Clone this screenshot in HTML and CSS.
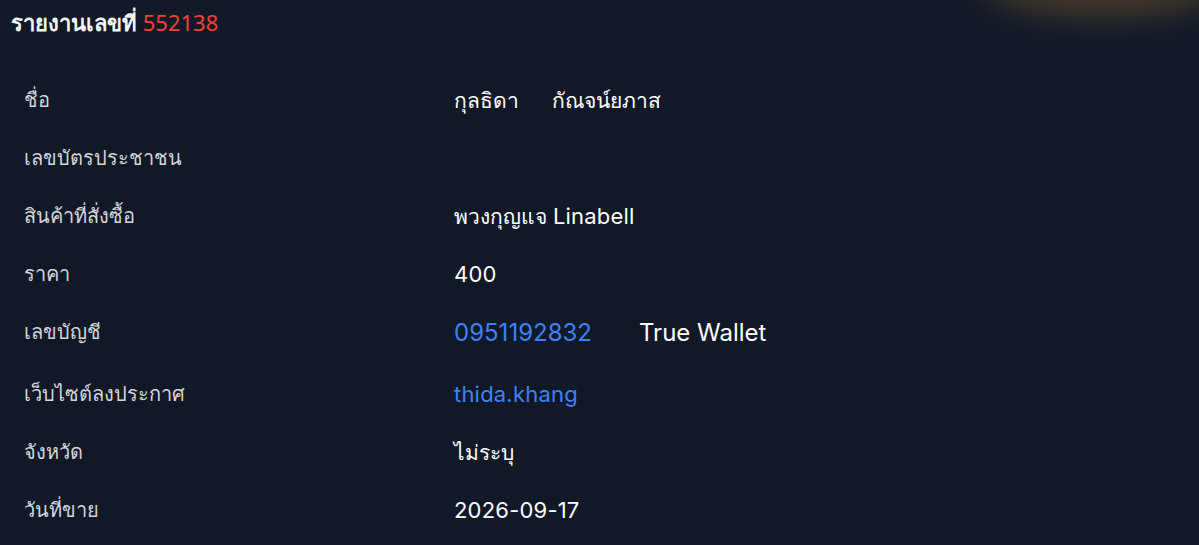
FILE: index.html
```html
<!DOCTYPE html>
<html lang="th">
<head>
  <meta charset="UTF-8" />
  <meta name="viewport" content="width=device-width, initial-scale=1.0" />
  <title>รายงานเลขที่ 552138</title>
  <link rel="stylesheet" href="styles.css">
</head>
<body>
  <div class="glow"></div>

  <h1 class="report-title">รายงานเลขที่ <span class="report-no">552138</span></h1>

  <div class="report-table">
    <div class="label">ชื่อ</div>
    <div class="value pair"><span>กุลธิดา</span><span>กัณจน์ยภาส</span></div>

    <div class="label">เลขบัตรประชาชน</div>
    <div class="value"></div>

    <div class="label">สินค้าที่สั่งซื้อ</div>
    <div class="value">พวงกุญแจ <span class="latin">Linabell</span></div>

    <div class="label">ราคา</div>
    <div class="value latin">400</div>

    <div class="label account-row">เลขบัญชี</div>
    <div class="value pair account account-row"><span class="link">0951192832</span><span>True Wallet</span></div>

    <div class="label">เว็บไซต์ลงประกาศ</div>
    <div class="value"><span class="link latin">thida.khang</span></div>

    <div class="label">จังหวัด</div>
    <div class="value">ไม่ระบุ</div>

    <div class="label">วันที่ขาย</div>
    <div class="value latin">2026-09-17</div>
  </div>
</body>
</html>
```

FILE: styles.css
```css
body {
  margin: 0;
  height: 545px;
  overflow: hidden;
  background: #111827;
  color: #fff;
  font-family: 'Noto Sans', 'Open Sans', sans-serif;
  position: relative;
}
.glow {
  position: absolute;
  top: -62px;
  right: -30px;
  width: 250px;
  height: 80px;
  border-radius: 50%;
  background: rgba(110, 85, 45, 0.55);
  filter: blur(16px);
}
.report-title {
  margin: 0;
  padding: 6px 0 0 11px;
  font-size: 22px;
  font-weight: 700;
  color: #f3f4f6;
}
.report-no {
  font-weight: 400;
  color: #ef4136;
}
.report-table {
  display: grid;
  grid-template-columns: 430px 1fr;
  grid-template-rows: 58px 58px 58px 58px 62px 58px 58px 58px;
  align-items: center;
  margin-top: 30px;
}
.label {
  padding-left: 24px;
  font-size: 20px;
  color: #d1d5db;
}
.value {
  padding-left: 24px;
  font-family: Inter, 'Noto Sans', sans-serif;
  font-size: 21px;
}
.pair {
  display: flex;
  align-items: baseline;
  gap: 33px;
}
.latin {
  font-size: 22px;
  letter-spacing: 0.2px;
}
.account-row {
  padding-bottom: 4px;
}
.account {
  font-size: 24px;
  gap: 47px;
}
.link {
  color: #3b82f6;
}
```
